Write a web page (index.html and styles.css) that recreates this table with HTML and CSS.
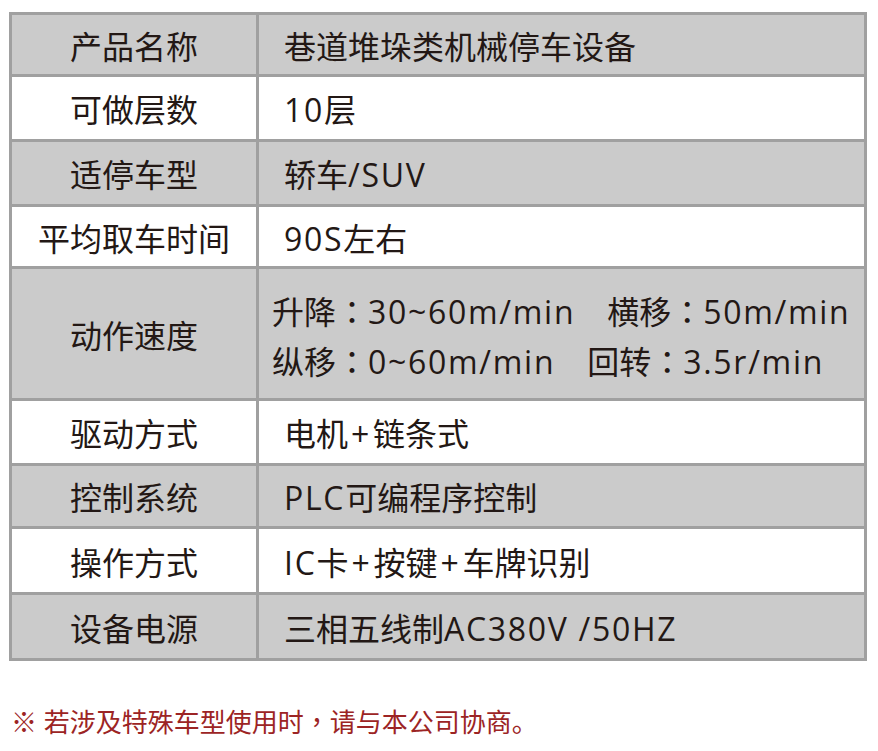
FILE: index.html
```html
<!DOCTYPE html>
<html lang="zh-CN">
<head>
<meta charset="utf-8">
<title>巷道堆垛类机械停车设备</title>
<link rel="stylesheet" href="styles.css">
</head>
<body>
<div class="page">
  <table class="spec">
    <tr class="alt"><th>产品名称</th><td>巷道堆垛类机械停车设备</td></tr>
    <tr><th>可做层数</th><td><span class="en">10</span>层</td></tr>
    <tr class="alt"><th>适停车型</th><td>轿车<span class="en">/SUV</span></td></tr>
    <tr><th>平均取车时间</th><td><span class="en">90S</span>左右</td></tr>
    <tr class="alt"><th>动作速度</th><td class="multi">升降<span class="cp" lang="zh-Hant">：</span><span class="en">30~60m/min</span>　横移<span class="cp" lang="zh-Hant">：</span><span class="en">50m/min</span><br>纵移<span class="cp" lang="zh-Hant">：</span><span class="en">0~60m/min</span>　回转<span class="cp" lang="zh-Hant">：</span><span class="en">3.5r/min</span></td></tr>
    <tr><th>驱动方式</th><td>电机<span class="en plus">+</span>链条式</td></tr>
    <tr class="alt"><th>控制系统</th><td><span class="en">PLC</span>可编程序控制</td></tr>
    <tr><th>操作方式</th><td><span class="en">IC</span>卡<span class="en plus">+</span>按键<span class="en plus">+</span>车牌识别</td></tr>
    <tr class="alt"><th>设备电源</th><td>三相五线制<span class="en">AC380V /50HZ</span></td></tr>
  </table>
  <p class="note">※ 若涉及特殊车型使用时<span class="cp" lang="zh-Hant">，</span>请与本公司协商。</p>
</div>
</body>
</html>
```

FILE: styles.css
```css
html, body {
  margin: 0;
  padding: 0;
  background: #ffffff;
}

body {
  font-family: "Open Sans", "Noto Sans CJK SC", sans-serif;
  color: #231815;
}

.page {
  padding: 12px 0 0 9px;
}

.spec {
  border-collapse: separate;
  border-spacing: 0;
  table-layout: fixed;
  width: 858px;
  border-top: 3px solid #a0a0a0;
  border-left: 3px solid #a0a0a0;
  background: #ffffff;
}

.spec th,
.spec td {
  box-sizing: border-box;
  border-right: 3px solid #a0a0a0;
  border-bottom: 3px solid #a0a0a0;
  padding: 4px 0 0 0;
  font-size: 32px;
  font-weight: 400;
  line-height: 40px;
  vertical-align: middle;
  white-space: nowrap;
}

.spec th {
  width: 247px;
  text-align: center;
}

.spec td {
  text-align: left;
  padding-left: 25px;
}

.spec td.multi {
  padding-left: 13px;
  line-height: 49px;
}

.spec tr.alt {
  background: #cbcbcb;
}

.spec tr:nth-child(1) { height: 62px; }
.spec tr:nth-child(2) { height: 65px; }
.spec tr:nth-child(3) { height: 65px; }
.spec tr:nth-child(4) { height: 62px; }
.spec tr:nth-child(5) { height: 132px; }
.spec tr:nth-child(6) { height: 65px; }
.spec tr:nth-child(7) { height: 63px; }
.spec tr:nth-child(8) { height: 66px; }
.spec tr:nth-child(9) { height: 66px; }

.en {
  letter-spacing: 1.7px;
}

.plus {
  margin: 0 2px 0 3px;
}

.cp {
  font-family: "Noto Sans CJK TC", "Noto Sans CJK SC", sans-serif;
}

.note {
  margin: 47px 0 0 2px;
  font-size: 26px;
  line-height: 26px;
  color: #9c2424;
  white-space: nowrap;
}
```
